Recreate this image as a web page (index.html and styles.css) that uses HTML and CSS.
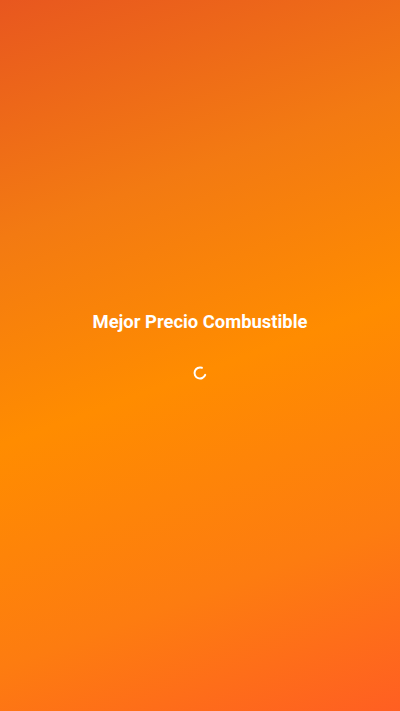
FILE: index.html
```html
<!DOCTYPE html>
<html lang="es">
<head>
<meta charset="utf-8">
<meta name="viewport" content="width=device-width, initial-scale=1">
<title>Mejor Precio Combustible</title>
<link rel="stylesheet" href="styles.css">
</head>
<body>
<main class="splash">
  <h1 class="splash-title">Mejor Precio Combustible</h1>
  <svg class="spinner" width="16" height="16" viewBox="0 0 16 16" aria-hidden="true">
    <path d="M9.9 2.8 A5.5 5.5 0 1 0 13.2 9.9" fill="none" stroke="#fff" stroke-width="2" stroke-linecap="round"/>
  </svg>
</main>
</body>
</html>
```

FILE: styles.css
```css
html, body {
  margin: 0;
  padding: 0;
  height: 100%;
}
body {
  font-family: Roboto, "Liberation Sans", sans-serif;
  background: linear-gradient(160deg, #e8571f 0%, #f37a12 28%, #ff8c00 52%, #fd7c10 78%, #ff5f22 100%);
}
.splash {
  height: 711px;
  display: flex;
  flex-direction: column;
  align-items: center;
  justify-content: center;
  padding-bottom: 20px;
  box-sizing: border-box;
}
.splash-title {
  margin: 0 0 32px;
  color: #fff;
  font-size: 18.4px;
  font-weight: 700;
  line-height: 22px;
  letter-spacing: 0;
}
.spinner {
  display: block;
}
```
